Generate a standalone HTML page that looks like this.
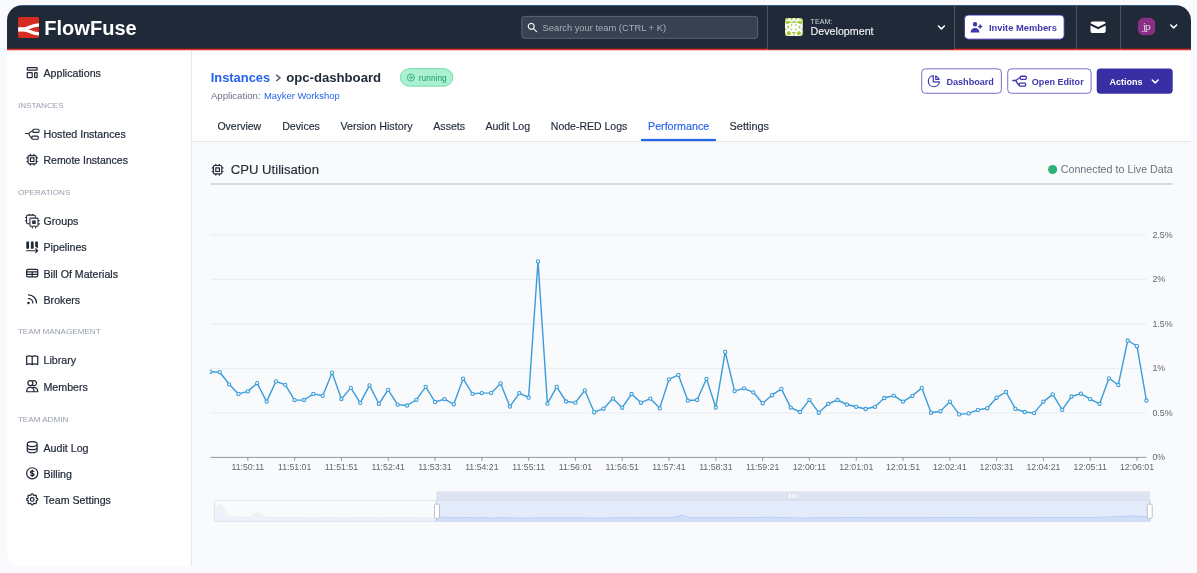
<!DOCTYPE html>
<html lang="en"><head><meta charset="utf-8"><title>FlowFuse - opc-dashboard Performance</title>
<style>
html,body{margin:0;padding:0}
body{width:1197px;height:573px;overflow:hidden;background:#f9fafd;position:relative;font-family:"Liberation Sans",Arial,sans-serif;-webkit-font-smoothing:antialiased}
.frame{position:absolute;left:7px;top:5px;width:1184px;height:561px;border-radius:15.5px 15.5px 13px 13px;overflow:hidden;background:#fff}
.abs,.t,.i{position:absolute}
.t{white-space:nowrap;line-height:20px}
.i{overflow:visible}
.hdr{left:0;top:0;width:1197px;height:44px;background:#1f2937}
.sep{top:5px;width:1px;height:43.7px;background:#4b5563}
.btn{box-sizing:border-box;border-radius:3.5px;border:1px solid #6a62c8;background:#fff}
</style></head><body>
<div class="frame"><div class="abs" style="left:-7px;top:-5px;width:1197px;height:573px;will-change:transform">

<div class="abs hdr" style="top:5px"></div>
<div class="abs" style="left:0;top:5px;width:1197px;height:1px;background:#345a88"></div>
<svg class="i" style="left:0;top:0" width="1197" height="573"><svg x="18.100" y="17" width="21" height="21" viewBox="0 0 21 21"><rect width="21" height="21" rx="1.6" fill="#d52d22"/><g fill="none" stroke="#fff"><path d="M0 12.400H8" stroke-width="4.400"/><path d="M6 12.100C9.500 12.100 13.500 8 21 7.800" stroke-width="3.300"/><path d="M6 12.700C9.500 12.700 13.500 16.600 21 16.800" stroke-width="3.300"/></g></svg></svg>
<div class="t" style="left:44.3px;top:18px;font-size:20.04px;color:#fff;font-weight:700;">FlowFuse</div>
<svg class="i" style="left:0;top:0" width="1197" height="573"><rect x="521.80" y="16.40" width="235.80" height="21.90" rx="2.6" fill="#374151" stroke="#65707f" stroke-width="0.8"/></svg>
<svg class="i" style="left:0;top:0" width="1197" height="573"><svg x="526.50" y="21.60" width="11.84" height="11.84" viewBox="0 0 20 20" fill="#f3f4f6"><path fill-rule="evenodd" clip-rule="evenodd" d="M8 4a4 4 0 100 8 4 4 0 000-8zM2 8a6 6 0 1110.89 3.476l4.817 4.817a1 1 0 01-1.414 1.414l-4.816-4.816A6 6 0 012 8z"/></svg></svg>
<div class="t" style="left:542.5px;top:18px;font-size:9.36px;color:#a9afb9;font-weight:400;">Search your team (CTRL + K)</div>
<div class="abs sep" style="left:767px"></div>
<div class="abs sep" style="left:953.5px"></div>
<div class="abs sep" style="left:1075.5px"></div>
<div class="abs sep" style="left:1120px"></div>
<svg class="i" style="left:0;top:0" width="1197" height="573"><svg x="784.800" y="17.900" width="18.100" height="18.100" viewBox="0 0 18 18"><defs><clipPath id="avc"><rect width="18" height="18" rx="3.2"/></clipPath></defs><g clip-path="url(#avc)"><rect width="18" height="18" fill="#fbfcff"/><g fill="#a8c935"><path d="M0 0h3.600v1.700H1.300V4H0zM18 0h-3.600v1.700h2.300V4H18zM0 18h1.800v-1.300H1.200V15H0zM18 18h-1.800v-1.300h0.600V15H18z"/><path d="M5 0H8.300L6.650 2.700zM9.700 0h3.300L11.350 2.700z"/><path d="M0.900 4.900C0.900 3.300 2.800 2.500 4.500 3.100L6.700 4L9 2.900L11.300 4L13.500 3.100C15.200 2.500 17.100 3.300 17.100 4.900C17.100 6.200 15.600 6.500 14.400 5.900L13.200 4.900H4.800L3.600 5.900C2.400 6.500 0.900 6.200 0.900 4.900z"/><path d="M0 9.900L1.900 11.500L0 13.100zM18 9.900L16.100 11.500L18 13.100zM2.600 7.400L4.200 8.300V10.200L2.600 10.600zM15.400 7.400L13.800 8.300V10.200L15.400 10.600z"/><path d="M1.900 14.900C1.900 13.500 3.600 12.800 4.900 13.400L6.300 15.400L5.200 17.100C3.600 17.500 1.900 16.500 1.900 14.900zM16.100 14.900C16.100 13.500 14.400 12.800 13.100 13.400L11.700 15.400L12.800 17.100C14.400 17.500 16.100 16.500 16.100 14.900z"/><path d="M7.100 14H10.900V15.100H9.700V17.400H8.300V15.100H7.100z"/><rect x="5.900" y="6.400" width="1.500" height="1.500" rx="0.300"/><rect x="10.200" y="6.400" width="1.500" height="1.500" rx="0.300"/><rect x="5.900" y="10.700" width="1.500" height="1.500" rx="0.300"/><rect x="10.200" y="10.700" width="1.500" height="1.500" rx="0.300"/></g></g></svg></svg>
<div class="t" style="left:810.6px;top:12px;font-size:7.1px;color:#d3d7de;font-weight:400;">TEAM:</div>
<div class="t" style="left:810.6px;top:21px;font-size:10.69px;color:#f3f4f6;font-weight:400;-webkit-text-stroke:0.12px #f3f4f6">Development</div>
<svg class="i" style="left:0;top:0" width="1197" height="573"><svg x="934.00" y="20.00" width="14.8" height="14.8" viewBox="0 0 20 20" fill="#fff"><path fill-rule="evenodd" clip-rule="evenodd" d="M5.293 7.293a1 1 0 011.414 0L10 10.586l3.293-3.293a1 1 0 111.414 1.414l-4 4a1 1 0 01-1.414 0l-4-4a1 1 0 010-1.414z"/></svg></svg>
<svg class="i" style="left:0;top:0" width="1197" height="573"><rect x="964.45" y="15.05" width="99.70" height="24.10" rx="3.8" fill="#fff" stroke="#3b32a8" stroke-width="0.9"/></svg>
<svg class="i" style="left:0;top:0" width="1197" height="573"><svg x="969.10" y="19.90" width="14.8" height="14.8" viewBox="0 0 20 20" fill="#3f36b0"><path d="M8 9a3 3 0 100-6 3 3 0 000 6zM8 11a6 6 0 016 6H2a6 6 0 016-6zM16 7a1 1 0 10-2 0v1h-1a1 1 0 100 2h1v1a1 1 0 102 0v-1h1a1 1 0 100-2h-1V7z"/></svg></svg>
<div class="t" style="left:989px;top:18px;font-size:9.34px;color:#3f36b0;font-weight:700;">Invite Members</div>
<svg class="i" style="left:0;top:0" width="1197" height="573"><svg x="1088.60" y="17.70" width="19" height="19" viewBox="0 0 20 20" fill="#fff"><path d="M2.003 5.884L10 9.882l7.997-3.998A2 2 0 0016 4H4a2 2 0 00-1.997 1.884z"/><path d="M18 8.118l-8 4-8-4V14a2 2 0 002 2h12a2 2 0 002-2V8.118z"/></svg></svg>
<svg class="i" style="left:0;top:0" width="1197" height="573"><rect x="1137.90" y="17.80" width="17.30" height="17.40" rx="5.6" fill="#8a2f86"/></svg>
<div class="t" style="left:1137.7px;top:17px;font-size:9.4px;color:#e6dbe5;font-weight:400;font-family:'DejaVu Serif','Liberation Serif',serif;width:17.3px;text-align:center;letter-spacing:-1px">jp</div>
<svg class="i" style="left:0;top:0" width="1197" height="573"><svg x="1166.30" y="19.00" width="14.8" height="14.8" viewBox="0 0 20 20" fill="#fff"><path fill-rule="evenodd" clip-rule="evenodd" d="M5.293 7.293a1 1 0 011.414 0L10 10.586l3.293-3.293a1 1 0 111.414 1.414l-4 4a1 1 0 01-1.414 0l-4-4a1 1 0 010-1.414z"/></svg></svg>
<div class="abs" style="left:7px;top:50.2px;width:184.2px;height:520px;background:#fff;border-right:1px solid #e5e7eb"></div>
<svg class="i" style="left:0;top:0" width="1197" height="573"><svg x="24.80" y="65.20" width="14.8" height="14.8" viewBox="0 0 24 24" fill="none" stroke="#1f2937" stroke-width="2" stroke-linecap="round" stroke-linejoin="round" overflow="visible"><path d="M4 5a1 1 0 011-1h14a1 1 0 011 1v2a1 1 0 01-1 1H5a1 1 0 01-1-1V5zM4 13a1 1 0 011-1h6a1 1 0 011 1v6a1 1 0 01-1 1H5a1 1 0 01-1-1v-6zM16 13a1 1 0 011-1h2a1 1 0 011 1v6a1 1 0 01-1 1h-2a1 1 0 01-1-1v-6z"/></svg></svg>
<div class="t" style="left:43.5px;top:63px;font-size:10.65px;color:#1f2937;font-weight:400;-webkit-text-stroke:0.22px #1f2937">Applications</div>
<div class="t" style="left:17.9px;top:96px;font-size:8.1px;color:#979eab;font-weight:400;">INSTANCES</div>
<svg class="i" style="left:0;top:0" width="1197" height="573"><svg x="24.90" y="128.65" width="14.7" height="11.1" viewBox="0 0 14.7 11.1" fill="none" stroke="#1f2937" stroke-width="1.1" stroke-linecap="round" stroke-linejoin="round" overflow="visible"><path d="M0.600 4.900H3M3 4.900C5.500 4.900 5.500 2.200 8 2.200M3 4.900C5 4.900 4.500 9 6.900 9"/><rect x="8" y="0.650" width="6.100" height="3.100" rx="1"/><rect x="6.900" y="7.450" width="6.500" height="3.100" rx="1"/></svg></svg>
<div class="t" style="left:43.5px;top:124px;font-size:10.65px;color:#1f2937;font-weight:400;-webkit-text-stroke:0.22px #1f2937">Hosted Instances</div>
<svg class="i" style="left:0;top:0" width="1197" height="573"><svg x="25.10" y="152.60" width="14.2" height="14.2" viewBox="0 0 24 24" fill="none" stroke="#1f2937" stroke-width="2" stroke-linecap="round" stroke-linejoin="round" overflow="visible"><path d="M9 3v2m6-2v2M9 19v2m6-2v2M5 9H3m2 6H3m18-6h-2m2 6h-2M7 19h10a2 2 0 002-2V7a2 2 0 00-2-2H7a2 2 0 00-2 2v10a2 2 0 002 2zM9 9h6v6H9V9z"/></svg></svg>
<div class="t" style="left:43.5px;top:151px;font-size:10.47px;color:#1f2937;font-weight:400;-webkit-text-stroke:0.22px #1f2937">Remote Instances</div>
<div class="t" style="left:17.9px;top:183px;font-size:8.1px;color:#979eab;font-weight:400;">OPERATIONS</div>
<svg class="i" style="left:0;top:0" width="1197" height="573"><svg x="24.90" y="213.85" width="15.2" height="14.7" viewBox="0 0 15.2 14.7" fill="none" stroke="#1f2937" stroke-width="1.05" stroke-linecap="round" stroke-linejoin="round" overflow="visible"><rect x="5" y="4.250" width="8.100" height="8.200" rx="0.800"/><rect x="7.300" y="6.600" width="3.500" height="3.500" fill="#1f2937" stroke="none"/><path d="M13.700 6.800h1M13.700 10h1M7.400 13.100v1M10.600 13.100v1"/><path d="M10.400 3.500V2.450a1.200 1.200 0 00-1.200-1.200H2.900a1.200 1.200 0 00-1.200 1.200V8.600a1.200 1.200 0 001.200 1.200H4.300M4.400 0.500v0.600M7.500 0.500v0.600M0.500 3.700h0.600M0.500 6.800h0.600"/></svg></svg>
<div class="t" style="left:43.5px;top:211px;font-size:10.65px;color:#1f2937;font-weight:400;-webkit-text-stroke:0.22px #1f2937">Groups</div>
<svg class="i" style="left:0;top:0" width="1197" height="573"><svg x="26.00" y="240.90" width="12.6" height="13" viewBox="0 0 12.6 13" fill="none" stroke="#1f2937" stroke-width="1.25" stroke-linecap="round" stroke-linejoin="round" overflow="visible"><g stroke="none" fill="#1f2937"><rect x="0.300" y="0.650" width="2.800" height="7.300" rx="0.500"/><rect x="4.900" y="0.650" width="2.750" height="7.300" rx="0.500"/><path d="M9.700 0.650h1.700a0.500 0.500 0 01.5.5V7.700L9.200 5.600V1.150a0.500 0.500 0 01.5-.5z"/></g><path d="M0.500 9.800H11.300M9.700 7.850L11.700 9.800L9.700 11.750" stroke-width="1.150"/></svg></svg>
<div class="t" style="left:43.5px;top:237px;font-size:10.65px;color:#1f2937;font-weight:400;-webkit-text-stroke:0.22px #1f2937">Pipelines</div>
<svg class="i" style="left:0;top:0" width="1197" height="573"><svg x="24.80" y="265.70" width="14.8" height="14.8" viewBox="0 0 24 24" fill="none" stroke="#1f2937" stroke-width="2" stroke-linecap="round" stroke-linejoin="round" overflow="visible"><path d="M3 10h18M3 14h18m-9-4v8m-7 0h14a2 2 0 002-2V8a2 2 0 00-2-2H5a2 2 0 00-2 2v8a2 2 0 002 2z"/></svg></svg>
<div class="t" style="left:43.5px;top:264px;font-size:10.65px;color:#1f2937;font-weight:400;-webkit-text-stroke:0.22px #1f2937">Bill Of Materials</div>
<svg class="i" style="left:0;top:0" width="1197" height="573"><svg x="24.80" y="291.80" width="14.8" height="14.8" viewBox="0 0 24 24" fill="none" stroke="#1f2937" stroke-width="2" stroke-linecap="round" stroke-linejoin="round" overflow="visible"><path d="M6 5c7.18 0 13 5.82 13 13M6 11a7 7 0 017 7m-6 0a1 1 0 11-2 0 1 1 0 012 0z"/></svg></svg>
<div class="t" style="left:43.5px;top:290px;font-size:10.65px;color:#1f2937;font-weight:400;-webkit-text-stroke:0.22px #1f2937">Brokers</div>
<div class="t" style="left:17.9px;top:322px;font-size:8.1px;color:#979eab;font-weight:400;">TEAM MANAGEMENT</div>
<svg class="i" style="left:0;top:0" width="1197" height="573"><svg x="24.80" y="352.70" width="14.8" height="14.8" viewBox="0 0 24 24" fill="none" stroke="#1f2937" stroke-width="2" stroke-linecap="round" stroke-linejoin="round" overflow="visible"><path d="M12 6.253v13m0-13C10.832 5.477 9.246 5 7.5 5S4.168 5.477 3 6.253v13C4.168 18.477 5.754 18 7.5 18s3.332.477 4.5 1.253m0-13C13.168 5.477 14.754 5 16.5 5c1.747 0 3.332.477 4.5 1.253v13C19.832 18.477 18.247 18 16.5 18c-1.746 0-3.332.477-4.5 1.253"/></svg></svg>
<div class="t" style="left:43.5px;top:350px;font-size:10.65px;color:#1f2937;font-weight:400;-webkit-text-stroke:0.22px #1f2937">Library</div>
<svg class="i" style="left:0;top:0" width="1197" height="573"><svg x="24.80" y="378.80" width="14.8" height="14.8" viewBox="0 0 24 24" fill="none" stroke="#1f2937" stroke-width="2" stroke-linecap="round" stroke-linejoin="round" overflow="visible"><path d="M12 4.354a4 4 0 110 5.292M15 21H3v-1a6 6 0 0112 0v1zm0 0h6v-1a6 6 0 00-9-5.197M13 7a4 4 0 11-8 0 4 4 0 018 0z"/></svg></svg>
<div class="t" style="left:43.5px;top:377px;font-size:10.65px;color:#1f2937;font-weight:400;-webkit-text-stroke:0.22px #1f2937">Members</div>
<div class="t" style="left:17.9px;top:410px;font-size:8.1px;color:#979eab;font-weight:400;">TEAM ADMIN</div>
<svg class="i" style="left:0;top:0" width="1197" height="573"><svg x="24.80" y="439.80" width="14.8" height="14.8" viewBox="0 0 24 24" fill="none" stroke="#1f2937" stroke-width="2" stroke-linecap="round" stroke-linejoin="round" overflow="visible"><path d="M4 7v10c0 2.21 3.582 4 8 4s8-1.79 8-4V7M4 7c0 2.21 3.582 4 8 4s8-1.79 8-4M4 7c0-2.21 3.582-4 8-4s8 1.79 8 4m0 5c0 2.21-3.582 4-8 4s-8-1.79-8-4"/></svg></svg>
<div class="t" style="left:43.5px;top:438px;font-size:10.65px;color:#1f2937;font-weight:400;-webkit-text-stroke:0.22px #1f2937">Audit Log</div>
<svg class="i" style="left:0;top:0" width="1197" height="573"><svg x="24.80" y="465.90" width="14.8" height="14.8" viewBox="0 0 24 24" fill="none" stroke="#1f2937" stroke-width="2" stroke-linecap="round" stroke-linejoin="round" overflow="visible"><path d="M12 8c-1.657 0-3 .895-3 2s1.343 2 3 2 3 .895 3 2-1.343 2-3 2m0-8c1.11 0 2.08.402 2.599 1M12 8V7m0 1v8m0 0v1m0-1c-1.11 0-2.08-.402-2.599-1M21 12a9 9 0 11-18 0 9 9 0 0118 0z"/></svg></svg>
<div class="t" style="left:43.5px;top:464px;font-size:10.65px;color:#1f2937;font-weight:400;-webkit-text-stroke:0.22px #1f2937">Billing</div>
<svg class="i" style="left:0;top:0" width="1197" height="573"><svg x="24.80" y="492.00" width="14.8" height="14.8" viewBox="0 0 24 24" fill="none" stroke="#1f2937" stroke-width="2" stroke-linecap="round" stroke-linejoin="round" overflow="visible"><path d="M10.325 4.317c.426-1.756 2.924-1.756 3.35 0a1.724 1.724 0 002.573 1.066c1.543-.94 3.31.826 2.37 2.37a1.724 1.724 0 001.065 2.572c1.756.426 1.756 2.924 0 3.35a1.724 1.724 0 00-1.066 2.573c.94 1.543-.826 3.31-2.37 2.37a1.724 1.724 0 00-2.572 1.065c-.426 1.756-2.924 1.756-3.35 0a1.724 1.724 0 00-2.573-1.066c-1.543.94-3.31-.826-2.37-2.37a1.724 1.724 0 00-1.065-2.572c-1.756-.426-1.756-2.924 0-3.35a1.724 1.724 0 001.066-2.573c-.94-1.543.826-3.31 2.37-2.37.996.608 2.296.07 2.572-1.065z"/><path d="M15 12a3 3 0 11-6 0 3 3 0 016 0z"/></svg></svg>
<div class="t" style="left:43.5px;top:490px;font-size:10.65px;color:#1f2937;font-weight:400;-webkit-text-stroke:0.22px #1f2937">Team Settings</div>
<div class="abs" style="left:192.2px;top:50px;width:1000px;height:91px;background:#fff"></div>
<div class="abs" style="left:192.2px;top:141px;width:1000px;height:430px;background:#f9fafb;border-top:1px solid #e5e7eb"></div>
<svg class="i" style="left:0;top:0" width="1197" height="573"><rect x="0.00" y="48.75" width="1197.00" height="1.50" rx="0" fill="#e3302a"/></svg>
<svg class="i" style="left:0;top:0" width="1197" height="573"><rect x="768.00" y="46.00" width="185.50" height="3.40" rx="0" fill="#1f2937"/></svg>
<div class="t" style="left:210.7px;top:68px;font-size:12.9px;color:#2563eb;font-weight:700;">Instances</div>
<svg class="i" style="left:0;top:0" width="1197" height="573"><svg x="275.60" y="74.20" width="5.6" height="7.4" viewBox="0 0 5.6 7.4" fill="none" stroke="#5b6370" stroke-width="1.45" stroke-linecap="round" stroke-linejoin="round" overflow="visible"><path d="M1 0.900L4.500 3.700L1 6.500"/></svg></svg>
<div class="t" style="left:286.2px;top:68px;font-size:13.15px;color:#1f2937;font-weight:700;">opc-dashboard</div>
<svg class="i" style="left:0;top:0" width="1197" height="573"><rect x="400.35" y="68.65" width="52.50" height="17.50" rx="9.2" fill="#a9f1d1" stroke="#6bd6a8" stroke-width="0.9"/></svg>
<svg class="i" style="left:0;top:0" width="1197" height="573"><svg x="406.20" y="72.90" width="9.4" height="9.4" viewBox="0 0 24 24" fill="none" stroke="#1d9a6c" stroke-width="1.9" stroke-linecap="round" stroke-linejoin="round" overflow="visible"><path d="M14.752 11.168l-3.197-2.132A1 1 0 0010 9.87v4.263a1 1 0 001.555.832l3.197-2.132a1 1 0 000-1.664z"/><path d="M21 12a9 9 0 11-18 0 9 9 0 0118 0z"/></svg></svg>
<div class="t" style="left:418.8px;top:68px;font-size:8.39px;color:#1d9a6c;font-weight:400;">running</div>
<div class="t" style="left:210.9px;top:86px;font-size:9.65px;color:#6b7280;font-weight:400;">Application:</div>
<div class="t" style="left:263.9px;top:86px;font-size:9.43px;color:#2563eb;font-weight:400;">Mayker Workshop</div>
<div class="t" style="left:217.4px;top:116px;font-size:10.51px;color:#1f2937;font-weight:400;-webkit-text-stroke:0.15px #1f2937">Overview</div>
<div class="t" style="left:282.2px;top:116px;font-size:10.6px;color:#1f2937;font-weight:400;-webkit-text-stroke:0.15px #1f2937">Devices</div>
<div class="t" style="left:340.4px;top:116px;font-size:10.74px;color:#1f2937;font-weight:400;-webkit-text-stroke:0.15px #1f2937">Version History</div>
<div class="t" style="left:433.3px;top:116px;font-size:10.6px;color:#1f2937;font-weight:400;-webkit-text-stroke:0.15px #1f2937">Assets</div>
<div class="t" style="left:485.4px;top:116px;font-size:10.6px;color:#1f2937;font-weight:400;-webkit-text-stroke:0.15px #1f2937">Audit Log</div>
<div class="t" style="left:550.8px;top:116px;font-size:10.51px;color:#1f2937;font-weight:400;-webkit-text-stroke:0.15px #1f2937">Node-RED Logs</div>
<div class="t" style="left:729.6px;top:116px;font-size:10.9px;color:#1f2937;font-weight:400;-webkit-text-stroke:0.15px #1f2937">Settings</div>
<div class="t" style="left:648px;top:116px;font-size:10.69px;color:#2563eb;font-weight:400;-webkit-text-stroke:0.15px #2563eb">Performance</div>
<svg class="i" style="left:0;top:0" width="1197" height="573"><rect x="641.00" y="138.90" width="74.90" height="2.20" rx="0" fill="#2563eb"/></svg>
<svg class="i" style="left:0;top:0" width="1197" height="573"><rect x="921.72" y="68.83" width="79.65" height="24.45" rx="3.6" fill="#fff" stroke="#5d55c4" stroke-width="0.85"/></svg>
<svg class="i" style="left:0;top:0" width="1197" height="573"><svg x="926.50" y="73.80" width="14.8" height="14.8" viewBox="0 0 24 24" fill="none" stroke="#3f36b0" stroke-width="2" stroke-linecap="round" stroke-linejoin="round" overflow="visible"><path d="M11 3.055A9.001 9.001 0 1020.945 13H11V3.055z"/><path d="M20.488 9H15V3.512A9.025 9.025 0 0120.488 9z"/></svg></svg>
<div class="t" style="left:946.4px;top:72px;font-size:9.11px;color:#3f36b0;font-weight:700;">Dashboard</div>
<svg class="i" style="left:0;top:0" width="1197" height="573"><rect x="1007.72" y="68.83" width="83.35" height="24.45" rx="3.6" fill="#fff" stroke="#5d55c4" stroke-width="0.85"/></svg>
<svg class="i" style="left:0;top:0" width="1197" height="573"><svg x="1012.20" y="75.60" width="14.7" height="11.1" viewBox="0 0 14.7 11.1" fill="none" stroke="#3f36b0" stroke-width="1.3" stroke-linecap="round" stroke-linejoin="round" overflow="visible"><path d="M0.600 4.900H3M3 4.900C5.500 4.900 5.500 2.200 8 2.200M3 4.900C5 4.900 4.500 9 6.900 9"/><rect x="8" y="0.650" width="6.100" height="3.100" rx="1"/><rect x="6.900" y="7.450" width="6.500" height="3.100" rx="1"/></svg></svg>
<div class="t" style="left:1031.8px;top:72px;font-size:9.07px;color:#3f36b0;font-weight:700;">Open Editor</div>
<svg class="i" style="left:0;top:0" width="1197" height="573"><rect x="1096.70" y="68.40" width="76.00" height="25.30" rx="3.6" fill="#392fa4"/></svg>
<div class="t" style="left:1109.5px;top:72px;font-size:9.03px;color:#fff;font-weight:700;">Actions</div>
<svg class="i" style="left:0;top:0" width="1197" height="573"><svg x="1147.80" y="74.00" width="14.8" height="14.8" viewBox="0 0 20 20" fill="#fff"><path fill-rule="evenodd" clip-rule="evenodd" d="M5.293 7.293a1 1 0 011.414 0L10 10.586l3.293-3.293a1 1 0 111.414 1.414l-4 4a1 1 0 01-1.414 0l-4-4a1 1 0 010-1.414z"/></svg></svg>
<svg class="i" style="left:0;top:0" width="1197" height="573"><svg x="210.40" y="162.50" width="14.4" height="14.4" viewBox="0 0 24 24" fill="none" stroke="#1f2937" stroke-width="2" stroke-linecap="round" stroke-linejoin="round" overflow="visible"><path d="M9 3v2m6-2v2M9 19v2m6-2v2M5 9H3m2 6H3m18-6h-2m2 6h-2M7 19h10a2 2 0 002-2V7a2 2 0 00-2-2H7a2 2 0 00-2 2v10a2 2 0 002 2zM9 9h6v6H9V9z"/></svg></svg>
<div class="t" style="left:230.8px;top:160px;font-size:13.12px;color:#1f2937;font-weight:400;-webkit-text-stroke:0.15px #1f2937">CPU Utilisation</div>
<svg class="i" style="left:0;top:0" width="1197" height="573"><rect x="1048.10" y="165.00" width="9.10" height="9.10" rx="4.55" fill="#2db27a"/></svg>
<div class="t" style="left:1060.7px;top:159px;font-size:10.72px;color:#6b7280;font-weight:400;">Connected to Live Data</div>
<svg class="i" style="left:0;top:0" width="1197" height="573"><rect x="210.70" y="183.10" width="962.00" height="1.75" rx="0" fill="#d1d5db"/></svg>
<svg class="i" style="left:0;top:0" width="1197" height="573" viewBox="0 0 1197 573" font-family="'Liberation Sans',Arial,sans-serif"><path d="M210.4 234.9H1146.4" stroke="#e6e9f2" stroke-width="0.9" fill="none"/><path d="M210.4 279.4H1146.4" stroke="#e6e9f2" stroke-width="0.9" fill="none"/><path d="M210.4 323.9H1146.4" stroke="#e6e9f2" stroke-width="0.9" fill="none"/><path d="M210.4 368.4H1146.4" stroke="#e6e9f2" stroke-width="0.9" fill="none"/><path d="M210.4 412.9H1146.4" stroke="#e6e9f2" stroke-width="0.9" fill="none"/><path d="M210.4 457.4H1146.4" stroke="#7a7c85" stroke-width="0.8" fill="none"/><text x="247.84" y="470.4" font-size="8.75" fill="#64666f" text-anchor="middle">11:50:11</text><text x="294.64" y="470.4" font-size="8.75" fill="#64666f" text-anchor="middle">11:51:01</text><text x="341.44" y="470.4" font-size="8.75" fill="#64666f" text-anchor="middle">11:51:51</text><text x="388.24" y="470.4" font-size="8.75" fill="#64666f" text-anchor="middle">11:52:41</text><text x="435.04" y="470.4" font-size="8.75" fill="#64666f" text-anchor="middle">11:53:31</text><text x="481.84" y="470.4" font-size="8.75" fill="#64666f" text-anchor="middle">11:54:21</text><text x="528.64" y="470.4" font-size="8.75" fill="#64666f" text-anchor="middle">11:55:11</text><text x="575.44" y="470.4" font-size="8.75" fill="#64666f" text-anchor="middle">11:56:01</text><text x="622.24" y="470.4" font-size="8.75" fill="#64666f" text-anchor="middle">11:56:51</text><text x="669.04" y="470.4" font-size="8.75" fill="#64666f" text-anchor="middle">11:57:41</text><text x="715.84" y="470.4" font-size="8.75" fill="#64666f" text-anchor="middle">11:58:31</text><text x="762.64" y="470.4" font-size="8.75" fill="#64666f" text-anchor="middle">11:59:21</text><text x="809.44" y="470.4" font-size="8.75" fill="#64666f" text-anchor="middle">12:00:11</text><text x="856.24" y="470.4" font-size="8.75" fill="#64666f" text-anchor="middle">12:01:01</text><text x="903.04" y="470.4" font-size="8.75" fill="#64666f" text-anchor="middle">12:01:51</text><text x="949.84" y="470.4" font-size="8.75" fill="#64666f" text-anchor="middle">12:02:41</text><text x="996.64" y="470.4" font-size="8.75" fill="#64666f" text-anchor="middle">12:03:31</text><text x="1043.44" y="470.4" font-size="8.75" fill="#64666f" text-anchor="middle">12:04:21</text><text x="1090.24" y="470.4" font-size="8.75" fill="#64666f" text-anchor="middle">12:05:11</text><text x="1137.04" y="470.4" font-size="8.75" fill="#64666f" text-anchor="middle">12:06:01</text><path d="M247.84 457.4v3.3 M294.64 457.4v3.3 M341.44 457.4v3.3 M388.24 457.4v3.3 M435.04 457.4v3.3 M481.84 457.4v3.3 M528.64 457.4v3.3 M575.44 457.4v3.3 M622.24 457.4v3.3 M669.04 457.4v3.3 M715.84 457.4v3.3 M762.64 457.4v3.3 M809.44 457.4v3.3 M856.24 457.4v3.3 M903.04 457.4v3.3 M949.84 457.4v3.3 M996.64 457.4v3.3 M1043.44 457.4v3.3 M1090.24 457.4v3.3 M1137.04 457.4v3.3" stroke="#7a7c85" stroke-width="0.8" fill="none"/><text x="1152.4" y="237.5" font-size="8.9" fill="#64666f">2.5%</text><text x="1152.4" y="282.0" font-size="8.9" fill="#64666f">2%</text><text x="1152.4" y="326.5" font-size="8.9" fill="#64666f">1.5%</text><text x="1152.4" y="371.0" font-size="8.9" fill="#64666f">1%</text><text x="1152.4" y="415.5" font-size="8.9" fill="#64666f">0.5%</text><text x="1152.4" y="460.0" font-size="8.9" fill="#64666f">0%</text><path d="M210.4 371.7 L219.8 372.2 L229.1 384.3 L238.5 393.9 L247.8 391.4 L257.2 383.2 L266.6 401.6 L275.9 381.4 L285.3 384.8 L294.6 400.1 L304.0 400.0 L313.4 393.9 L322.7 395.8 L332.1 372.7 L341.4 399.0 L350.8 387.9 L360.2 402.8 L369.5 385.4 L378.9 403.8 L388.2 389.8 L397.6 404.6 L407.0 405.5 L416.3 399.8 L425.7 386.8 L435.0 402.0 L444.4 399.1 L453.8 404.3 L463.1 378.7 L472.5 393.8 L481.8 393.1 L491.2 392.9 L500.6 383.4 L509.9 406.6 L519.3 393.1 L528.6 397.5 L538.0 261.4 L547.4 403.6 L556.7 386.9 L566.1 401.5 L575.4 402.6 L584.8 390.3 L594.2 412.2 L603.5 408.7 L612.9 398.6 L622.2 407.7 L631.6 394.0 L641.0 402.7 L650.3 398.6 L659.7 408.3 L669.0 379.3 L678.4 374.9 L687.8 400.5 L697.1 400.0 L706.5 378.8 L715.8 407.5 L725.2 351.9 L734.6 391.1 L743.9 388.3 L753.3 392.3 L762.6 403.2 L772.0 395.2 L781.4 388.9 L790.7 407.6 L800.1 412.0 L809.4 399.8 L818.8 412.7 L828.2 403.8 L837.5 400.0 L846.9 404.5 L856.2 406.8 L865.6 409.0 L875.0 406.8 L884.3 398.0 L893.7 395.6 L903.0 401.6 L912.4 395.8 L921.8 387.9 L931.1 412.7 L940.5 411.2 L949.8 401.7 L959.2 414.4 L968.6 413.4 L977.9 409.9 L987.3 408.2 L996.6 397.7 L1006.0 392.0 L1015.4 408.9 L1024.7 412.0 L1034.1 413.1 L1043.4 401.6 L1052.8 394.4 L1062.2 409.8 L1071.5 396.5 L1080.9 393.7 L1090.2 399.1 L1099.6 403.8 L1109.0 378.3 L1118.3 385.0 L1127.7 340.5 L1137.0 346.2 L1146.4 400.5" fill="none" stroke="#3b9cd9" stroke-width="1.4" stroke-linejoin="bevel"/><clipPath id="gc"><rect x="209.700" y="200" width="945" height="256"/></clipPath><g clip-path="url(#gc)" fill="#f9fafb" stroke="#3b9cd9" stroke-width="1.05"><circle cx="210.4" cy="371.7" r="1.65"/><circle cx="219.8" cy="372.2" r="1.65"/><circle cx="229.1" cy="384.3" r="1.65"/><circle cx="238.5" cy="393.9" r="1.65"/><circle cx="247.8" cy="391.4" r="1.65"/><circle cx="257.2" cy="383.2" r="1.65"/><circle cx="266.6" cy="401.6" r="1.65"/><circle cx="275.9" cy="381.4" r="1.65"/><circle cx="285.3" cy="384.8" r="1.65"/><circle cx="294.6" cy="400.1" r="1.65"/><circle cx="304.0" cy="400.0" r="1.65"/><circle cx="313.4" cy="393.9" r="1.65"/><circle cx="322.7" cy="395.8" r="1.65"/><circle cx="332.1" cy="372.7" r="1.65"/><circle cx="341.4" cy="399.0" r="1.65"/><circle cx="350.8" cy="387.9" r="1.65"/><circle cx="360.2" cy="402.8" r="1.65"/><circle cx="369.5" cy="385.4" r="1.65"/><circle cx="378.9" cy="403.8" r="1.65"/><circle cx="388.2" cy="389.8" r="1.65"/><circle cx="397.6" cy="404.6" r="1.65"/><circle cx="407.0" cy="405.5" r="1.65"/><circle cx="416.3" cy="399.8" r="1.65"/><circle cx="425.7" cy="386.8" r="1.65"/><circle cx="435.0" cy="402.0" r="1.65"/><circle cx="444.4" cy="399.1" r="1.65"/><circle cx="453.8" cy="404.3" r="1.65"/><circle cx="463.1" cy="378.7" r="1.65"/><circle cx="472.5" cy="393.8" r="1.65"/><circle cx="481.8" cy="393.1" r="1.65"/><circle cx="491.2" cy="392.9" r="1.65"/><circle cx="500.6" cy="383.4" r="1.65"/><circle cx="509.9" cy="406.6" r="1.65"/><circle cx="519.3" cy="393.1" r="1.65"/><circle cx="528.6" cy="397.5" r="1.65"/><circle cx="538.0" cy="261.4" r="1.65"/><circle cx="547.4" cy="403.6" r="1.65"/><circle cx="556.7" cy="386.9" r="1.65"/><circle cx="566.1" cy="401.5" r="1.65"/><circle cx="575.4" cy="402.6" r="1.65"/><circle cx="584.8" cy="390.3" r="1.65"/><circle cx="594.2" cy="412.2" r="1.65"/><circle cx="603.5" cy="408.7" r="1.65"/><circle cx="612.9" cy="398.6" r="1.65"/><circle cx="622.2" cy="407.7" r="1.65"/><circle cx="631.6" cy="394.0" r="1.65"/><circle cx="641.0" cy="402.7" r="1.65"/><circle cx="650.3" cy="398.6" r="1.65"/><circle cx="659.7" cy="408.3" r="1.65"/><circle cx="669.0" cy="379.3" r="1.65"/><circle cx="678.4" cy="374.9" r="1.65"/><circle cx="687.8" cy="400.5" r="1.65"/><circle cx="697.1" cy="400.0" r="1.65"/><circle cx="706.5" cy="378.8" r="1.65"/><circle cx="715.8" cy="407.5" r="1.65"/><circle cx="725.2" cy="351.9" r="1.65"/><circle cx="734.6" cy="391.1" r="1.65"/><circle cx="743.9" cy="388.3" r="1.65"/><circle cx="753.3" cy="392.3" r="1.65"/><circle cx="762.6" cy="403.2" r="1.65"/><circle cx="772.0" cy="395.2" r="1.65"/><circle cx="781.4" cy="388.9" r="1.65"/><circle cx="790.7" cy="407.6" r="1.65"/><circle cx="800.1" cy="412.0" r="1.65"/><circle cx="809.4" cy="399.8" r="1.65"/><circle cx="818.8" cy="412.7" r="1.65"/><circle cx="828.2" cy="403.8" r="1.65"/><circle cx="837.5" cy="400.0" r="1.65"/><circle cx="846.9" cy="404.5" r="1.65"/><circle cx="856.2" cy="406.8" r="1.65"/><circle cx="865.6" cy="409.0" r="1.65"/><circle cx="875.0" cy="406.8" r="1.65"/><circle cx="884.3" cy="398.0" r="1.65"/><circle cx="893.7" cy="395.6" r="1.65"/><circle cx="903.0" cy="401.6" r="1.65"/><circle cx="912.4" cy="395.8" r="1.65"/><circle cx="921.8" cy="387.9" r="1.65"/><circle cx="931.1" cy="412.7" r="1.65"/><circle cx="940.5" cy="411.2" r="1.65"/><circle cx="949.8" cy="401.7" r="1.65"/><circle cx="959.2" cy="414.4" r="1.65"/><circle cx="968.6" cy="413.4" r="1.65"/><circle cx="977.9" cy="409.9" r="1.65"/><circle cx="987.3" cy="408.2" r="1.65"/><circle cx="996.6" cy="397.7" r="1.65"/><circle cx="1006.0" cy="392.0" r="1.65"/><circle cx="1015.4" cy="408.9" r="1.65"/><circle cx="1024.7" cy="412.0" r="1.65"/><circle cx="1034.1" cy="413.1" r="1.65"/><circle cx="1043.4" cy="401.6" r="1.65"/><circle cx="1052.8" cy="394.4" r="1.65"/><circle cx="1062.2" cy="409.8" r="1.65"/><circle cx="1071.5" cy="396.5" r="1.65"/><circle cx="1080.9" cy="393.7" r="1.65"/><circle cx="1090.2" cy="399.1" r="1.65"/><circle cx="1099.6" cy="403.8" r="1.65"/><circle cx="1109.0" cy="378.3" r="1.65"/><circle cx="1118.3" cy="385.0" r="1.65"/><circle cx="1127.7" cy="340.5" r="1.65"/><circle cx="1137.0" cy="346.2" r="1.65"/><circle cx="1146.4" cy="400.5" r="1.65"/></g><path d="M214.3 507.6 L220.7 504.0 L228.0 516.4 L236 517.2 L249.6 517.4 L256.6 512.3 L264 516.8 L270 517.6 L283 517.4 L285 517.8 L300 517.6 L315 517.9 L330 517.5 L345 517.8 L360 517.6 L380 517.8 L400 517.6 L420 517.8 L436.3 517.7 L436.3 521.4 L214.3 521.4Z" fill="#eef1f8"/><path d="M214.3 507.6 L220.7 504.0 L228.0 516.4 L236 517.2 L249.6 517.4 L256.6 512.3 L264 516.8 L270 517.6 L283 517.4 L285 517.8 L300 517.6 L315 517.9 L330 517.5 L345 517.8 L360 517.6 L380 517.8 L400 517.6 L420 517.8 L436.3 517.7" fill="none" stroke="#e3e8f3" stroke-width="0.6"/><rect x="214.3" y="500.4" width="935.6000000000001" height="21.0" rx="2" fill="none" stroke="#d5ddef" stroke-width="0.8"/><rect x="436.3" y="491.4" width="713.6000000000001" height="9" fill="#dde3f1"/><rect x="436.3" y="500.4" width="713.6000000000001" height="21.0" fill="#e4ecfc"/><path d="M436.3 517.7 L441 517.0 L447 517.6 L455 517.8 L470 517.3 L472 517.9 L485 517.6 L487 518.0 L500 517.7 L520 517.9 L560 517.8 L600 517.9 L640 517.6 L670 517.8 L683 515.2 L690 517.6 L720 517.8 L770 517.3 L800 517.9 L850 517.5 L900 517.8 L950 517.4 L1000 517.8 L1050 517.5 L1090 517.6 L1110 516.9 L1125 516.2 L1135 515.8 L1142 516.4 L1149.9 517.4 L1149.9 521.4 L436.3 521.4Z" fill="#d2def8"/><path d="M436.3 517.7 L441 517.0 L447 517.6 L455 517.8 L470 517.3 L472 517.9 L485 517.6 L487 518.0 L500 517.7 L520 517.9 L560 517.8 L600 517.9 L640 517.6 L670 517.8 L683 515.2 L690 517.6 L720 517.8 L770 517.3 L800 517.9 L850 517.5 L900 517.8 L950 517.4 L1000 517.8 L1050 517.5 L1090 517.6 L1110 516.9 L1125 516.2 L1135 515.8 L1142 516.4 L1149.9 517.4" fill="none" stroke="#a9c6f3" stroke-width="0.7"/><path d="M436.3 500.4H1149.9M436.3 521.4H1149.9" fill="none" stroke="#cbd4ea" stroke-width="0.7" stroke-dasharray="2 1"/><path d="M436.3 500.4V521.4M1149.9 500.4V521.4" fill="none" stroke="#b3bdd3" stroke-width="0.7"/><rect x="434.5" y="504.1" width="5" height="14.4" rx="1.6" fill="#fff" stroke="#acb3c4" stroke-width="0.8"/><rect x="1147.2" y="504.1" width="5" height="14.4" rx="1.6" fill="#fff" stroke="#acb3c4" stroke-width="0.8"/><g fill="#fbfcfe"><rect x="789.300" y="493.900" width="1.600" height="4"/><rect x="792.300" y="493.900" width="1.600" height="4"/><rect x="795.400" y="493.900" width="1.600" height="4"/></g></svg>
</div></div></body></html>
